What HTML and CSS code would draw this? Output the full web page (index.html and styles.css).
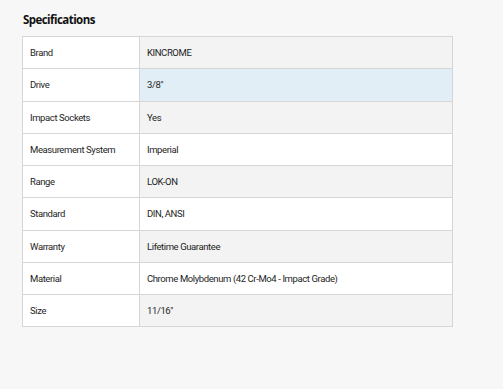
FILE: index.html
```html
<!DOCTYPE html>
<html>
<head>
<meta charset="utf-8">
<link rel="stylesheet" href="styles.css">
</head>
<body>
<section class="specs">
  <h2 class="specs-title">Specifications</h2>
  <table class="specs-table">
    <tbody>
      <tr class="odd"><td class="label">Brand</td><td class="value">KINCROME</td></tr>
      <tr class="even hl"><td class="label">Drive</td><td class="value">3/8"</td></tr>
      <tr class="odd"><td class="label">Impact Sockets</td><td class="value">Yes</td></tr>
      <tr class="even"><td class="label">Measurement System</td><td class="value">Imperial</td></tr>
      <tr class="odd"><td class="label">Range</td><td class="value">LOK-ON</td></tr>
      <tr class="even"><td class="label">Standard</td><td class="value">DIN, ANSI</td></tr>
      <tr class="odd"><td class="label">Warranty</td><td class="value">Lifetime Guarantee</td></tr>
      <tr class="even"><td class="label">Material</td><td class="value">Chrome Molybdenum (42 Cr-Mo4 - Impact Grade)</td></tr>
      <tr class="odd"><td class="label">Size</td><td class="value">11/16"</td></tr>
    </tbody>
  </table>
</section>
</body>
</html>
```
FILE: styles.css
```css
html, body {
  margin: 0;
  padding: 0;
  background: #f7f7f7;
}
body {
  font-family: "Roboto", "Liberation Sans", sans-serif;
  color: #1e1e1e;
}
.specs {
  padding: 13px 0 0 22px;
}
.specs-title {
  margin: 0 0 9px 1px;
  font-family: "Open Sans", "Liberation Sans", sans-serif;
  font-size: 11.5px;
  font-weight: 700;
  letter-spacing: -0.55px;
  line-height: 14px;
  color: #111;
}
.specs-table {
  border-collapse: collapse;
  width: 431px;
  font-size: 9.5px;
  letter-spacing: -0.4px;
}
.specs-table td {
  border: 1px solid #d6d6d6;
  height: 32.25px;
  padding: 0 0 0 7px;
  vertical-align: middle;
  box-sizing: border-box;
}
.specs-table .label {
  width: 117px;
  background: #fff;
}
.specs-table .value {
  background: #fff;
}
.specs-table .odd .value {
  background: #f3f3f3;
}
.specs-table .hl .value {
  background: #e2eef5;
}
```
